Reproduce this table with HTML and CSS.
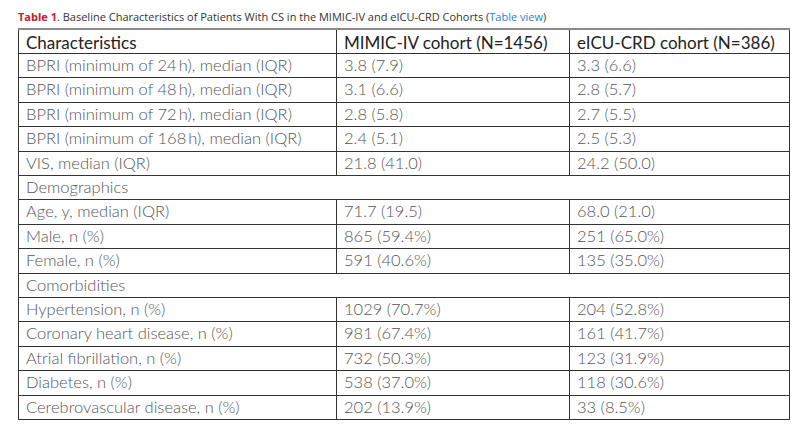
FILE: index.html
```html
<!DOCTYPE html>
<html>
<head>
<meta charset="utf-8">
<link rel="stylesheet" href="styles.css">
</head>
<body>
<div class="page">
  <p class="caption"><span class="label">Table 1</span>. Baseline Characteristics of Patients With CS in the MIMIC-IV and eICU-CRD Cohorts (<a class="link" href="#">Table view</a>)</p>
  <table class="data">
    <colgroup><col class="c1"><col class="c2"><col class="c3"></colgroup>
    <thead>
      <tr class="head"><th>Characteristics</th><th>MIMIC-IV cohort (N=1456)</th><th>eICU-CRD cohort (N=386)</th></tr>
    </thead>
    <tbody>
      <tr><td>BPRI (minimum of 24&#8201;h), median (IQR)</td><td>3.8 (7.9)</td><td>3.3 (6.6)</td></tr>
      <tr><td>BPRI (minimum of 48&#8201;h), median (IQR)</td><td>3.1 (6.6)</td><td>2.8 (5.7)</td></tr>
      <tr><td>BPRI (minimum of 72&#8201;h), median (IQR)</td><td>2.8 (5.8)</td><td>2.7 (5.5)</td></tr>
      <tr><td>BPRI (minimum of 168&#8201;h), median (IQR)</td><td>2.4 (5.1)</td><td>2.5 (5.3)</td></tr>
      <tr><td>VIS, median (IQR)</td><td>21.8 (41.0)</td><td>24.2 (50.0)</td></tr>
      <tr class="section"><td colspan="3">Demographics</td></tr>
      <tr><td>Age, y, median (IQR)</td><td>71.7 (19.5)</td><td>68.0 (21.0)</td></tr>
      <tr><td>Male, n (%)</td><td>865 (59.4%)</td><td>251 (65.0%)</td></tr>
      <tr><td>Female, n (%)</td><td>591 (40.6%)</td><td>135 (35.0%)</td></tr>
      <tr class="section"><td colspan="3">Comorbidities</td></tr>
      <tr><td>Hypertension, n (%)</td><td>1029 (70.7%)</td><td>204 (52.8%)</td></tr>
      <tr><td>Coronary heart disease, n (%)</td><td>981 (67.4%)</td><td>161 (41.7%)</td></tr>
      <tr><td>Atrial fibrillation, n (%)</td><td>732 (50.3%)</td><td>123 (31.9%)</td></tr>
      <tr><td>Diabetes, n (%)</td><td>538 (37.0%)</td><td>118 (30.6%)</td></tr>
      <tr><td>Cerebrovascular disease, n (%)</td><td>202 (13.9%)</td><td>33 (8.5%)</td></tr>
    </tbody>
  </table>
</div>
</body>
</html>
```

FILE: styles.css
```css
html, body {
  margin: 0;
  padding: 0;
  background: #ffffff;
}
.page {
  padding: 10px 0 0 18px;
  font-family: "Lato", "Open Sans", sans-serif;
}
.caption {
  margin: 0 0 4px 0;
  font-family: "Open Sans", sans-serif;
  font-size: 11px;
  line-height: 14px;
  color: #333;
}
.label {
  color: #c8202f;
  font-weight: 700;
}
.link {
  color: #2f7fc1;
  text-decoration: none;
}
.data {
  border-collapse: collapse;
  width: 771px;
  table-layout: fixed;
  border-top: 2px solid #8a8a8a;
  border-right: 1px solid #777;
}
.c1 { width: 318px; }
.c2 { width: 233px; }
.c3 { width: 220px; }
.data th, .data td {
  border: 1px solid #333;
  padding: 0 0 0 7px;
  text-align: left;
  white-space: nowrap;
  font-weight: 300;
}
.data th {
  height: 21px;
  line-height: 21px;
  padding-top: 2px;
  font-size: 17px;
  color: #222;
  font-weight: 400;
}
.data td {
  height: 23.4px;
  line-height: 23.4px;
  font-size: 16.5px;
  color: #555;
}
```
